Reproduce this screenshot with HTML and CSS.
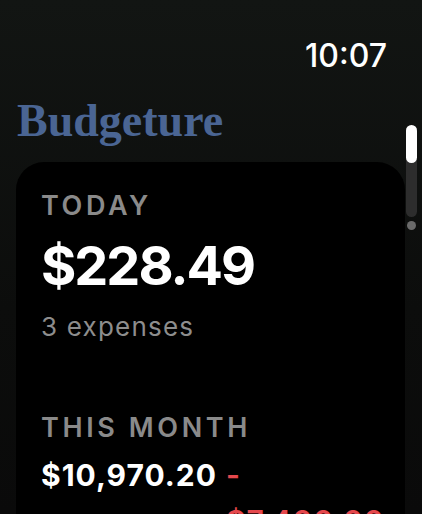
FILE: index.html
```html
<!DOCTYPE html>
<html lang="en">
<head>
    <meta charset="UTF-8">
    <meta name="viewport" content="width=device-width, initial-scale=1.0">
    <title>Budgeture</title>
    <link rel="stylesheet" href="styles.css">
</head>
<body>
    <!-- Status bar -->
    <div class="status">
        <span class="time">10:07</span>
    </div>

    <h1 class="title">Budgeture</h1>

    <!-- Scroll indicator -->
    <div class="scroll-track">
        <div class="scroll-thumb"></div>
    </div>
    <div class="scroll-dot"></div>

    <!-- Summary card -->
    <div class="card">
        <div class="label">TODAY</div>
        <div class="amount">$228.49</div>
        <div class="sub">3 expenses</div>

        <div class="label month">THIS MONTH</div>
        <div class="month-row">
            <span class="spent">$10,970.20</span>
            <span class="diff">- $7,400.00</span>
        </div>
    </div>
</body>
</html>
```

FILE: styles.css
```css
/* Page */
body {
    margin: 0;
    width: 422px;
    height: 514px;
    overflow: hidden;
    position: relative;
    background: linear-gradient(180deg, #121513 0%, #0c0d0c 60%, #0a0a0a 100%);
    font-family: Inter, "Noto Sans", sans-serif;
    color: #fff;
}

/* Status bar */
.status {
    display: flex;
    justify-content: flex-end;
    padding: 38px 35px 0 0;
}

.time {
    font-size: 32px;
    line-height: 36px;
    font-weight: 500;
}

.title {
    margin: 22px 0 16px 17px;
    font-family: "Liberation Serif", serif;
    font-weight: bold;
    font-size: 46px;
    line-height: 50px;
    color: #4a6593;
}

/* Scroll indicator */
.scroll-track {
    position: absolute;
    left: 406px;
    top: 125px;
    width: 11px;
    height: 92px;
    border-radius: 6px;
    background-color: #2d2d2d;
}

.scroll-thumb {
    height: 38px;
    border-radius: 6px;
    background-color: #fff;
}

.scroll-dot {
    position: absolute;
    left: 407px;
    top: 221px;
    width: 9px;
    height: 9px;
    border-radius: 50%;
    background-color: #6a6a6a;
}

/* Card */
.card {
    margin-left: 16px;
    width: 300px;
    min-height: 400px;
    padding: 28px 64px 28px 25px;
    background-color: #000;
    border-radius: 28px;
}

.label {
    font-size: 27px;
    line-height: 32px;
    font-weight: 600;
    letter-spacing: 3.6px;
    color: #8a8a8a;
}

.amount {
    margin-top: 14px;
    font-size: 54px;
    line-height: 60px;
    font-weight: 700;
    letter-spacing: -2px;
}

.sub {
    margin-top: 16px;
    font-size: 26px;
    line-height: 30px;
    letter-spacing: 1.2px;
    color: #8d8d8d;
}

.label.month {
    margin-top: 70px;
}

.month-row {
    display: flex;
    gap: 9px;
    margin-top: 8px;
    font-size: 30px;
    line-height: 46px;
    font-weight: 700;
    letter-spacing: 1px;
}

.spent {
    white-space: nowrap;
}

.diff {
    flex: 1;
    min-width: 0;
    color: #e5484d;
    font-weight: 600;
}
```
